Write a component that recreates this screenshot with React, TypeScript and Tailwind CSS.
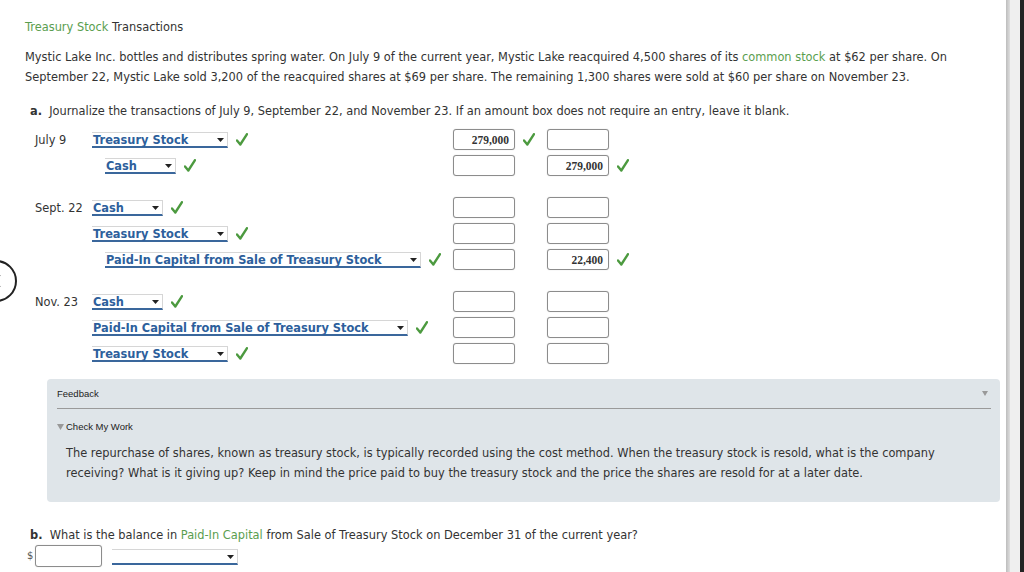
import React from 'react'

const font = "font-['DejaVu_Sans',Verdana,sans-serif]"

function Check() {
  return (
    <svg width="12" height="13" viewBox="0 0 12 13" className="shrink-0">
      <path d="M1 7.5 L4.3 11.5 L11 1.2" fill="none" stroke="#4c9a3f" strokeWidth="2.4" strokeLinecap="round" strokeLinejoin="round" />
    </svg>
  )
}

function Select({ label, w }: { label: string; w: string }) {
  return (
    <div className={`${w} h-[16px] mt-[2px] flex items-center justify-between bg-white border-t border-r border-[#d6d6d6] border-b-2 border-b-[#3a679c]`}>
      <span className="text-[11.4px] leading-[12px] font-bold text-[#2d5f9c] pl-px whitespace-nowrap">{label}</span>
      <svg width="7" height="4" viewBox="0 0 7 4" className="mr-[3px]">
        <path d="M0 0 L7 0 L3.5 4 Z" fill="#222" />
      </svg>
    </div>
  )
}

function Amount({ value }: { value?: string }) {
  return (
    <div className="w-[62px] h-[21px] rounded-[3px] border border-[#8c8c8c] bg-white shadow-[0_0_1px_rgba(0,0,0,0.25)] flex items-center justify-end pr-[5px]">
      <span className="mt-[3px] leading-none font-['Liberation_Serif',serif] font-bold text-[11.5px] text-[#333]">{value}</span>
    </div>
  )
}

type Row = { date?: string; label: string; w: string; indent?: boolean; dr?: string; cr?: string; drOk?: boolean; crOk?: boolean }

function JRow({ r }: { r: Row }) {
  return (
    <div className="h-[26px] flex items-center">
      <div className="w-[57px] mt-[3px] text-[11.4px] text-[#333]">{r.date}</div>
      <div className={`w-[361px] h-full flex items-center gap-[8px] ${r.indent ? 'pl-[13px]' : ''}`}>
        <Select label={r.label} w={r.w} />
        <Check />
      </div>
      <div className="w-[94px] flex items-center gap-[8px]">
        <Amount value={r.dr} />
        {r.drOk && <Check />}
      </div>
      <div className="flex items-center gap-[8px]">
        <Amount value={r.cr} />
        {r.crOk && <Check />}
      </div>
    </div>
  )
}

const groups: Row[][] = [
  [
    { date: 'July 9', label: 'Treasury Stock', w: 'w-[136px]', dr: '279,000', drOk: true },
    { label: 'Cash', w: 'w-[71px]', indent: true, cr: '279,000', crOk: true },
  ],
  [
    { date: 'Sept. 22', label: 'Cash', w: 'w-[71px]' },
    { label: 'Treasury Stock', w: 'w-[136px]' },
    { label: 'Paid-In Capital from Sale of Treasury Stock', w: 'w-[316px]', indent: true, cr: '22,400', crOk: true },
  ],
  [
    { date: 'Nov. 23', label: 'Cash', w: 'w-[71px]' },
    { label: 'Paid-In Capital from Sale of Treasury Stock', w: 'w-[316px]' },
    { label: 'Treasury Stock', w: 'w-[136px]' },
  ],
]

export default function App() {
  return (
    <div className={`relative w-[1024px] h-[572px] overflow-hidden bg-white flex ${font} text-[#333]`}>
      <div className="w-[1006px] h-full pl-[25px] pt-[17px]">
        <p className="text-[11.4px] leading-[20px]">
          <span className="text-[#5a9e4f]">Treasury Stock</span> Transactions
        </p>
        <p className="mt-[10px] text-[11.4px] leading-[20px] pr-[30px]">
          Mystic Lake Inc. bottles and distributes spring water. On July 9 of the current year, Mystic Lake reacquired 4,500 shares of its{' '}
          <span className="text-[#5a9e4f]">common stock</span> at $62 per share. On September 22, Mystic Lake sold 3,200 of the reacquired shares at $69 per share. The remaining 1,300 shares were sold at $60 per share on November 23.
        </p>
        <p className="mt-[14px] ml-[5px] text-[11.4px] leading-[20px]">
          <b>a.</b>&nbsp; Journalize the transactions of July 9, September 22, and November 23. If an amount box does not require an entry, leave it blank.
        </p>

        <div className="ml-[10px] mt-[5px]">
          {groups.map((g, i) => (
            <div key={i} className={i > 0 ? 'mt-[16px]' : ''}>
              {g.map((r, j) => (
                <JRow key={j} r={r} />
              ))}
            </div>
          ))}
        </div>

        <div className="ml-[22px] mt-[13px] w-[953px] h-[123px] rounded-[4px] bg-[#dfe5e9] pl-[10px] pr-[9px]">
          <div className="h-[30px] flex items-center justify-between border-b border-[#9a9a9a] font-['Liberation_Sans',Arial,sans-serif] text-[9.5px] text-[#222]">
            <span className="mt-px">Feedback</span>
            <svg width="6" height="5" viewBox="0 0 6 5" className="mr-[3px]">
              <path d="M0 0 L6 0 L3 5 Z" fill="#999" />
            </svg>
          </div>
          <div className="mt-[12px] flex items-center gap-[2px] font-['Liberation_Sans',Arial,sans-serif] text-[9.5px] leading-[12px] text-[#222]">
            <svg width="7" height="6" viewBox="0 0 7 6">
              <path d="M0 0 L7 0 L3.5 6 Z" fill="#999" />
            </svg>
            <span>Check My Work</span>
          </div>
          <p className="mt-[10px] pl-[9px] pr-[30px] text-[11.4px] leading-[20px] text-[#333]">
            The repurchase of shares, known as treasury stock, is typically recorded using the cost method. When the treasury stock is resold, what is the company receiving? What is it giving up? Keep in mind the price paid to buy the treasury stock and the price the shares are resold for at a later date.
          </p>
        </div>

        <p className="mt-[23px] ml-[5px] text-[11.4px] leading-[20px]">
          <b>b.</b>&nbsp; What is the balance in <span className="text-[#5a9e4f]">Paid-In Capital</span> from Sale of Treasury Stock on December 31 of the current year?
        </p>
        <div className="flex items-center h-[22px]">
          <span className="w-[10px] pl-[2px] text-[10px] leading-none text-[#555]">$</span>
          <div className="w-[67px] h-[22px] rounded-[3px] border border-[#8c8c8c] bg-white shadow-[0_0_1px_rgba(0,0,0,0.25)]" />
          <div className="ml-[10px]">
            <Select label="" w="w-[126px]" />
          </div>
        </div>
      </div>

      <div className="w-[4px] h-full bg-gradient-to-r from-[#bdbdbd] to-[#dedede]" />
      <div className="w-[10px] h-full bg-[#efefef]" />
      <div className="w-[4px] h-full bg-[#232323]" />

      <div className="absolute left-[-25px] top-[260px] w-[42px] h-[42px] rounded-full border-2 border-[#222] bg-white flex items-center justify-center">
        <svg width="10" height="14" viewBox="0 0 10 14" className="ml-[4px]">
          <path d="M7 1 L2 7 L7 13" fill="none" stroke="#333" strokeWidth="1.5" />
        </svg>
      </div>
    </div>
  )
}
